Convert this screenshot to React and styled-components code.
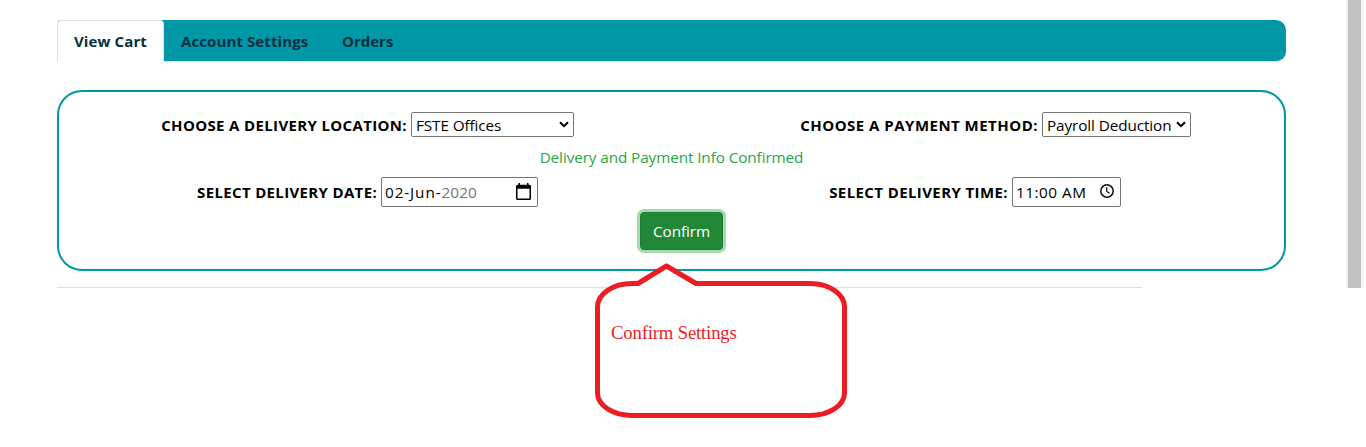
import React from "react";
import styled, { createGlobalStyle } from "styled-components";

const Global = createGlobalStyle`
  *, *::before, *::after { box-sizing: border-box; }
  body {
    margin: 0;
    background: #fff;
    overflow: hidden;
    color: #000;
    font: 400 15.3px/24px "Open Sans", "Noto Sans", sans-serif;
  }
`;

const Page = styled.div`
  position: relative;
  display: flex;
  justify-content: space-between;
  width: 1366px;
  height: 447px;
  padding: 0 3px 0 57px;
`;
const Content = styled.main`
  width: 1229px;
  padding-top: 20px;
`;
const Tabs = styled.nav`
  display: flex;
  height: 42px;
  background: #0097a7;
  border-bottom: 1px solid #dee2e6;
  border-radius: 4px 10px 10px 0;
`;
const Tab = styled.a`
  width: ${(p) => p.$width}px;
  height: 42px;
  padding: 8px 0 0 16px;
  border: 1px solid ${(p) => (p.$active ? "#dee2e6" : "transparent")};
  border-bottom-color: ${(p) => (p.$active ? "#fff" : "transparent")};
  border-radius: 4px 4px 0 0;
  background: ${(p) => (p.$active ? "#fff" : "transparent")};
  color: #06303f;
  font-size: 15px;
  font-weight: 700;
  letter-spacing: ${(p) => p.$spacing}px;
  white-space: nowrap;
`;
const Panel = styled.section`
  height: 181px;
  margin-top: 28px;
  padding-top: 20px;
  border: 2px solid #0097a7;
  border-radius: 25px;
`;
const Row = styled.div`
  display: grid;
  grid-template-columns: ${(p) => p.$columns};
  column-gap: 4px;
  align-items: center;
  height: ${(p) => p.$height}px;
`;
const Label = styled.label`
  color: #000;
  font-size: 15px;
  font-weight: 700;
  letter-spacing: ${(p) => p.$spacing}px;
  text-align: right;
  white-space: nowrap;
`;
const SelectBox = styled.div`
  position: relative;
  height: 25px;
`;
const Select = styled.select`
  display: block;
  appearance: none;
  width: 100%;
  height: 25px;
  padding: 1px 0 0 4px;
  border: 1px solid #767676;
  border-radius: 2px;
  background: #fff;
  color: #000;
  font: inherit;
  line-height: 23px;
  letter-spacing: -0.1px;
`;
const Arrow = styled.svg`
  position: absolute;
  right: 5px;
  top: 9px;
  pointer-events: none;
`;
const Picker = styled.div`
  display: flex;
  align-items: center;
  justify-content: space-between;
  height: 30px;
  padding: 0 6px 0 3px;
  border: 1px solid #767676;
  border-radius: 2px;
  letter-spacing: ${(p) => p.$spacing}px;
  white-space: pre;

  svg { margin-bottom: 2px; }
`;
const Muted = styled.span`
  color: #757575;
  letter-spacing: 0.1px;
`;
const Message = styled.p`
  height: 40px;
  margin: 0;
  padding-top: 8px;
  color: #28a745;
  letter-spacing: -0.1px;
  text-align: center;
`;
const Actions = styled.div`
  display: flex;
  justify-content: center;
  padding: 5px 0 0 20px;
`;
const Confirm = styled.button`
  width: 83px;
  height: 38px;
  padding: 0;
  border: 1px solid #1e7e34;
  border-radius: 4px;
  background: #218838;
  box-shadow: 0 0 0 3px #a6dbb2;
  color: #fff;
  font: inherit;
  letter-spacing: -0.1px;
`;
const Divider = styled.hr`
  width: 1085px;
  height: 1px;
  margin: 16px 0 0;
  border: 0;
  background: #dfdfdf;
`;
const Track = styled.div`
  width: 17px;
  height: 288px;
  padding: 0 2px;
  background: #f1f1f1;
`;
const Thumb = styled.div`
  height: 100%;
  background: #c1c1c1;
`;
const Callout = styled.div`
  position: absolute;
  left: 595px;
  top: 262px;
  width: 252px;
  height: 156px;
`;
const Bubble = styled.svg`
  position: absolute;
  inset: 0;
`;
const Note = styled.span`
  position: absolute;
  left: 16px;
  top: 59px;
  color: #ed1c24;
  font: 18.67px/24px "Liberation Serif", serif;
  letter-spacing: -0.15px;
  white-space: nowrap;
`;

const CalendarIcon = () => (
  <svg width="15" height="17" viewBox="0 0 15 17">
    <path d="M2.500 0h1.500v1.800h7V0h1.500v1.800h1A1.500 1.500 0 0 1 15 3.300v12.200a1.500 1.500 0 0 1-1.500 1.500h-12A1.500 1.500 0 0 1 0 15.500V3.300A1.500 1.500 0 0 1 1.500 1.800h1zM1.500 5.800v9.700h12V5.800z" />
  </svg>
);
const ClockIcon = () => (
  <svg width="14" height="14" viewBox="0 0 14 14" fill="none" stroke="#111">
    <circle cx="7" cy="7" r="6.200" strokeWidth="1.500" />
    <path d="M6.700 3.300v4.200l3 1.800" strokeWidth="1.200" />
  </svg>
);

const Dropdown = ({ value }) => (
  <SelectBox>
    <Select><option>{value}</option></Select>
    <Arrow width="10" height="7" viewBox="0 0 10 7">
      <path d="M1 1.200L5 5.200L9 1.200" fill="none" stroke="#000" strokeWidth="2" />
    </Arrow>
  </SelectBox>
);

export default function App() {
  return (
    <Page>
      <Global />
      <Content>
        <Tabs>
          <Tab $active $width={107} $spacing={0.12}>View Cart</Tab>
          <Tab $width={161} $spacing={0.1}>Account Settings</Tab>
          <Tab $width={85} $spacing={0}>Orders</Tab>
        </Tabs>
        <Panel>
          <Row $columns="348px 163px 460px 149px" $height={25}>
            <Label $spacing={0.35}>CHOOSE A DELIVERY LOCATION:</Label>
            <Dropdown value="FSTE Offices" />
            <Label $spacing={0.48}>CHOOSE A PAYMENT METHOD:</Label>
            <Dropdown value="Payroll Deduction" />
          </Row>
          <Message>Delivery and Payment Info Confirmed</Message>
          <Row $columns="318px 157px 466px 109px" $height={30}>
            <Label $spacing={0.34}>SELECT DELIVERY DATE:</Label>
            <Picker $spacing={0.9}>
              <span>02-Jun-<Muted>2020</Muted></span>
              <CalendarIcon />
            </Picker>
            <Label $spacing={0.4}>SELECT DELIVERY TIME:</Label>
            <Picker $spacing={0.5}>
              <span>11:00 AM</span>
              <ClockIcon />
            </Picker>
          </Row>
          <Actions><Confirm>Confirm</Confirm></Actions>
        </Panel>
        <Divider />
      </Content>
      <Track><Thumb /></Track>
      <Callout>
        <Bubble width="252" height="156" viewBox="0 0 252 156">
          <path
            d="M43 21.500L71.500 4L101 21.500H215A34.500 23.500 0 0 1 249.500 45V131A34.500 22.500 0 0 1 215 153.500H37A34.500 22.500 0 0 1 2.500 131V45A34.500 23.500 0 0 1 37 21.500Z"
            fill="#fff" stroke="#ed1c24" strokeWidth="5" strokeLinejoin="round"
          />
        </Bubble>
        <Note>Confirm Settings</Note>
      </Callout>
    </Page>
  );
}
